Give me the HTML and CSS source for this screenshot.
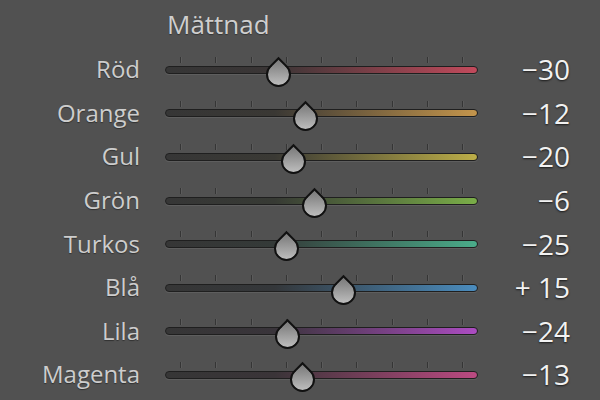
FILE: index.html
```html
<!DOCTYPE html>
<html lang="sv">
<head>
<meta charset="utf-8">
<link rel="stylesheet" href="styles.css">
</head>
<body>
<div class="panel">
  <div class="title">Mättnad</div>
  <div class="rows">
    <div class="row red">
      <div class="label">Röd</div>
      <div class="slider"><div class="ticks"><i></i><i></i><i></i><i></i><i></i><i></i><i></i><i></i><i></i></div><div class="track"></div><div class="thumb" style="left: 113px"></div></div>
      <div class="value">−30</div>
    </div>
    <div class="row orange">
      <div class="label">Orange</div>
      <div class="slider"><div class="ticks"><i></i><i></i><i></i><i></i><i></i><i></i><i></i><i></i><i></i></div><div class="track"></div><div class="thumb" style="left: 140px"></div></div>
      <div class="value">−12</div>
    </div>
    <div class="row yellow">
      <div class="label">Gul</div>
      <div class="slider"><div class="ticks"><i></i><i></i><i></i><i></i><i></i><i></i><i></i><i></i><i></i></div><div class="track"></div><div class="thumb" style="left: 128px"></div></div>
      <div class="value">−20</div>
    </div>
    <div class="row green">
      <div class="label">Grön</div>
      <div class="slider"><div class="ticks"><i></i><i></i><i></i><i></i><i></i><i></i><i></i><i></i><i></i></div><div class="track"></div><div class="thumb" style="left: 149px"></div></div>
      <div class="value">−6</div>
    </div>
    <div class="row aqua">
      <div class="label">Turkos</div>
      <div class="slider"><div class="ticks"><i></i><i></i><i></i><i></i><i></i><i></i><i></i><i></i><i></i></div><div class="track"></div><div class="thumb" style="left: 121px"></div></div>
      <div class="value">−25</div>
    </div>
    <div class="row blue">
      <div class="label">Blå</div>
      <div class="slider"><div class="ticks"><i></i><i></i><i></i><i></i><i></i><i></i><i></i><i></i><i></i></div><div class="track"></div><div class="thumb" style="left: 178px"></div></div>
      <div class="value">+ 15</div>
    </div>
    <div class="row purple">
      <div class="label">Lila</div>
      <div class="slider"><div class="ticks"><i></i><i></i><i></i><i></i><i></i><i></i><i></i><i></i><i></i></div><div class="track"></div><div class="thumb" style="left: 122px"></div></div>
      <div class="value">−24</div>
    </div>
    <div class="row magenta">
      <div class="label">Magenta</div>
      <div class="slider"><div class="ticks"><i></i><i></i><i></i><i></i><i></i><i></i><i></i><i></i><i></i></div><div class="track"></div><div class="thumb" style="left: 137px"></div></div>
      <div class="value">−13</div>
    </div>
  </div>
</div>
</body>
</html>
```

FILE: styles.css
```css
html, body {
  margin: 0;
  padding: 0;
  background: #515151;
}
body {
  width: 600px;
  height: 400px;
  overflow: hidden;
  font-family: "Open Sans", "Noto Sans", sans-serif;
  color: #d2d2d2;
}
.panel {
  padding-top: 6px;
}
.title {
  margin-left: 167px;
  font-size: 26px;
  line-height: 36px;
  height: 42px;
  color: #cfcfcf;
  text-shadow: 0 1px 1px rgba(0,0,0,0.35);
}
.row {
  display: grid;
  grid-template-columns: 140px 338px 92px;
  height: 43.6px;
  align-items: center;
}
.label {
  text-align: right;
  font-size: 24px;
  line-height: 30px;
  color: #cdcdcd;
  text-shadow: 0 1px 1px rgba(0,0,0,0.4);
  margin-top: -1px;
}
.slider {
  position: relative;
  height: 43.6px;
  margin-left: 25px;
  width: 313px;
  display: flex;
  align-items: center;
}
.track {
  flex: 1;
  height: 6px;
  border: 1.5px solid #1f1f1f;
  border-radius: 5px;
  box-shadow: 0 1px 0 rgba(255,255,255,0.08);
}
.ticks {
  position: absolute;
  left: 15px;
  top: 9px;
  width: 283px;
  display: flex;
  justify-content: space-between;
}
.ticks i {
  display: block;
  width: 1px;
  height: 6px;
  background: #353535;
  box-shadow: 1px 0 0 rgba(255,255,255,0.06);
}
.thumb {
  position: absolute;
  top: 9px;
  width: 26px;
  height: 28px;
  margin-left: -13px;
}
.thumb::before {
  content: "";
  position: absolute;
  left: 0;
  top: 0;
  width: 21px;
  height: 21px;
  margin: 5px 0 0 0.5px;
  border: 2px solid #111;
  border-radius: 50% 0 50% 50%;
  transform: rotate(-45deg);
  background: linear-gradient(45deg, #c9c9c9, #8c8c8c 75%, #7a7a7a);
}
.value {
  text-align: right;
  font-size: 28px;
  line-height: 34px;
  color: #f2f2f2;
  text-shadow: 0 1px 2px rgba(0,0,0,0.7);
  margin-top: -1px;
}
.red .track { background: linear-gradient(to right, #363636 0%, #3a3535 35%, #c24a5c 100%); }
.orange .track { background: linear-gradient(to right, #363636 0%, #3a3834 35%, #c4954c 100%); }
.yellow .track { background: linear-gradient(to right, #363636 0%, #3a3934 35%, #bcae48 100%); }
.green .track { background: linear-gradient(to right, #363636 0%, #373a34 35%, #7aae48 100%); }
.aqua .track { background: linear-gradient(to right, #363636 0%, #343a38 35%, #4aac8a 100%); }
.blue .track { background: linear-gradient(to right, #363636 0%, #34373a 35%, #4a8cbe 100%); }
.purple .track { background: linear-gradient(to right, #363636 0%, #39343a 35%, #ac4cc2 100%); }
.magenta .track { background: linear-gradient(to right, #363636 0%, #3a3438 35%, #bc4a82 100%); }
```
